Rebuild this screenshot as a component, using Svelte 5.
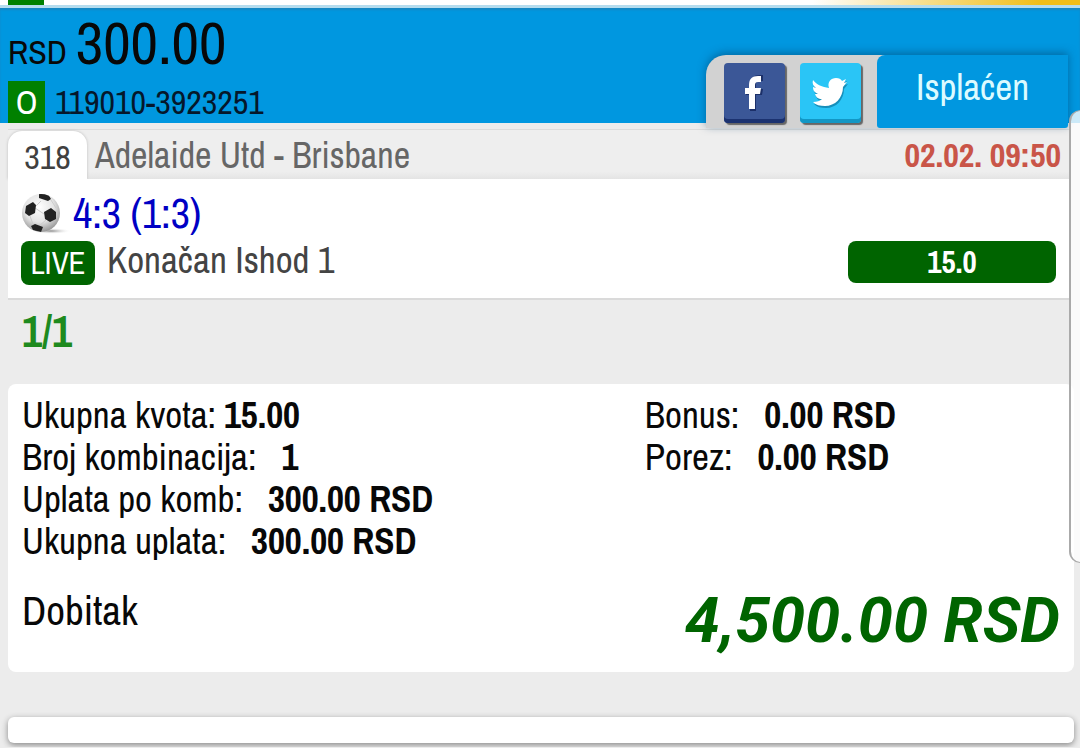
<script lang="ts">
    interface Total {
        label: string;
        value: string;
        tight?: boolean;
    }

    const ticket = {
        currency: 'RSD',
        amount: '300.00',
        mark: 'O',
        code: '119010-3923251',
        status: 'Isplaćen',
        hits: '1/1',
        payout: '4,500.00 RSD'
    };

    const match = {
        id: '318',
        teams: 'Adelaide Utd - Brisbane',
        time: '02.02. 09:50',
        score: '4:3 (1:3)',
        bet: 'Konačan Ishod 1',
        odds: '15.0'
    };

    const stakes: Total[] = [
        { label: 'Ukupna kvota:', value: '15.00', tight: true },
        { label: 'Broj kombinacija:', value: '1' },
        { label: 'Uplata po komb:', value: '300.00 RSD' },
        { label: 'Ukupna uplata:', value: '300.00 RSD' }
    ];

    const extras: Total[] = [
        { label: 'Bonus:', value: '0.00 RSD' },
        { label: 'Porez:', value: '0.00 RSD' }
    ];
</script>

<div class="page">
    <div class="previous">
        <span class="previous-mark"></span>
        <span class="previous-status"></span>
    </div>

    <header class="ticket-header">
        <div class="ticket-info">
            <div class="amount">
                <span class="currency">{ticket.currency}</span>
                <span class="value">{ticket.amount}</span>
            </div>
            <div class="code">
                <span class="mark">{ticket.mark}</span>
                <span>{ticket.code}</span>
            </div>
        </div>
        <div class="tabs">
            <div class="share">
                <button class="facebook" aria-label="Facebook">
                    <svg viewBox="0 0 60 56">
                        <path class="shade" d="M26 46V30h-4v-6h4v-4c0-7 4-10 10-10h3v6h-3c-3 0-4 1-4 4v4h7l-1 6h-6v16z" />
                        <path d="M25 44V29h-4v-6h4v-3c0-6 3-9 9-9h3v6h-3c-2 0-3 1-3 3v3h6l-1 6h-5v15z" />
                    </svg>
                </button>
                <button class="twitter" aria-label="Twitter">
                    <svg viewBox="0 0 60 56">
                        <path class="shade" transform="translate(1 1)" d="M13 16c4 5 9 7 16 8-2-6 2-10 7-10 3 0 5 1 6 3l4-2-2 4 3-1-4 5c0 11-8 19-18 19-5 0-9-1-12-4 4 0 7-1 9-3-4 0-6-2-7-5h3c-4-2-5-4-5-7l3 1c-3-2-4-5-3-8z" />
                        <path transform="translate(0 -1)" d="M13 16c4 5 9 7 16 8-2-6 2-10 7-10 3 0 5 1 6 3l4-2-2 4 3-1-4 5c0 11-8 19-18 19-5 0-9-1-12-4 4 0 7-1 9-3-4 0-6-2-7-5h3c-4-2-5-4-5-7l3 1c-3-2-4-5-3-8z" />
                    </svg>
                </button>
            </div>
            <div class="status">{ticket.status}</div>
        </div>
    </header>

    <main>
        <section class="match">
            <div class="match-head">
                <span class="match-id">{match.id}</span>
                <span class="teams">{match.teams}</span>
                <time>{match.time}</time>
            </div>
            <div class="match-body">
                <div class="score">
                    <svg class="ball" viewBox="0 0 50 42" aria-hidden="true">
                        <defs>
                            <radialGradient id="ball-skin" cx="0.45" cy="0.35" r="0.65">
                                <stop offset="0" stop-color="#fff" />
                                <stop offset="0.6" stop-color="#e4e4e4" />
                                <stop offset="1" stop-color="#999" />
                            </radialGradient>
                            <radialGradient id="ball-shadow">
                                <stop offset="0" stop-color="#888" />
                                <stop offset="1" stop-color="#fff" stop-opacity="0" />
                            </radialGradient>
                            <clipPath id="ball-edge"><circle cx="20" cy="21" r="19" /></clipPath>
                        </defs>
                        <ellipse cx="30" cy="39" rx="20" ry="3" fill="url(#ball-shadow)" />
                        <circle cx="20" cy="21" r="19" fill="url(#ball-skin)" />
                        <g clip-path="url(#ball-edge)">
                            <path class="seam" d="M14 16l9 6M20 9l-6 6M30 8l5 8M9 24l4 11M25 28l-7 6" />
                            <path class="patch" d="M18 1l9 1 3 5-3 2-9-3zM5 14l7-4 3 3-1 8-6 3-4-3zM23 20l7-4 5 4v7l-6 3-5-3zM10 34l4-2 8 3-2 5-8-2z" />
                        </g>
                    </svg>
                    <span>{match.score}</span>
                </div>
                <div class="bet">
                    <span class="live">LIVE</span>
                    <span class="bet-name">{match.bet}</span>
                    <strong class="odds">{match.odds}</strong>
                </div>
            </div>
        </section>

        <div class="hits">{ticket.hits}</div>

        <section class="summary">
            <div class="totals">
                {#each [stakes, extras] as column}
                    <div class="column">
                        {#each column as total}
                            <div class="total" class:tight={total.tight}>
                                <span>{total.label}</span>
                                <strong>{total.value}</strong>
                            </div>
                        {/each}
                    </div>
                {/each}
            </div>
            <div class="payout">
                <span>Dobitak</span>
                <strong>{ticket.payout}</strong>
            </div>
        </section>

        <div class="next"></div>
    </main>

    <div class="scroll-handle"></div>
</div>

<style>
    :global(body) {
        margin: 0;
        background: #ececec;
    }

    .page {
        position: relative;
        overflow: hidden;
        padding-bottom: 4px;
        font-family: 'Archivo Narrow', 'Liberation Sans Narrow', 'Arial Narrow', 'Liberation Sans', sans-serif;
        color: #080808;
    }

    .previous {
        display: flex;
        justify-content: space-between;
        height: 5px;
        padding-left: 8px;
        background: #fff;
        border-bottom: 3px solid #b5dcee;
    }

    .previous-mark {
        width: 36px;
        background: #008000;
    }

    .previous-status {
        width: 25%;
        background: linear-gradient(to right, #fff, #f0bd18 85%);
    }

    .ticket-header {
        display: flex;
        justify-content: space-between;
        align-items: flex-end;
        height: 115px;
        padding: 0 12px 0 8px;
        background: #0097e0;
        box-shadow: inset 0 2px 2px #1787c2;
    }

    .amount {
        display: flex;
        align-items: baseline;
        gap: 9px;
        line-height: 58px;
    }

    .currency {
        font-size: 34px;
    }

    .value {
        font-size: 60px;
    }

    .code {
        display: flex;
        align-items: center;
        gap: 10px;
        font-size: 34px;
        line-height: 42px;
        color: #05172b;
    }

    .mark {
        width: 37px;
        text-align: center;
        color: #fff;
        background: #008000;
    }

    .tabs {
        display: flex;
        height: 73px;
        margin-bottom: -5px;
        background: #d2d2d2;
        border-radius: 20px 0 0 0;
        box-shadow: 0 -2px 8px rgba(0, 60, 100, 0.5);
        z-index: 1;
    }

    .share {
        display: flex;
        gap: 15px;
        padding: 8px 16px 0 18px;
    }

    .share button {
        width: 61px;
        height: 60px;
        padding: 0;
        border: 0;
        border-radius: 4px;
    }

    .share svg {
        display: block;
        width: 60px;
        height: 56px;
        fill: #fff;
    }

    .facebook {
        background: #3b5797;
        box-shadow: inset 0 -4px #1b3270, 2px 2px 1px #666;
    }

    .twitter {
        background: #2ac5f6;
        box-shadow: inset 0 -4px #1297c5, 2px 2px 1px #666;
    }

    .facebook .shade {
        fill: #1c3069;
    }

    .twitter .shade {
        fill: #168fbb;
    }

    .status {
        width: 191px;
        color: #dcfbff;
        font-size: 37px;
        line-height: 64px;
        text-align: center;
        background: #0097e0;
        border-radius: 8px 0 3px 3px;
    }

    main {
        padding: 6px 6px 0 8px;
    }

    .match {
        margin-right: 5px;
    }

    .match-head {
        display: flex;
        align-items: center;
        height: 49px;
        font-size: 36px;
        color: #666;
        background: linear-gradient(#eee 85%, #e4e4e4);
        border-top: 1px solid #dcdcdc;
    }

    .match-id {
        align-self: flex-end;
        width: 79px;
        margin-right: 8px;
        padding-top: 4px;
        font-size: 34px;
        line-height: 44px;
        text-align: center;
        color: #404040;
        background: #fff;
        border-radius: 14px 14px 0 0;
        box-shadow: 0 0 3px #bbb;
    }

    time {
        margin-left: auto;
        padding-right: 8px;
        font-size: 34px;
        font-weight: bold;
        color: #c95548;
    }

    .match-body {
        position: relative;
        padding: 12px 13px 13px;
        background: #fff;
        border-bottom: 2px solid #dadada;
    }

    .score {
        display: flex;
        align-items: center;
        gap: 2px;
        height: 43px;
        font-size: 42px;
        color: #0000c4;
    }

    .ball {
        width: 50px;
        height: 42px;
    }

    .seam {
        fill: none;
        stroke: #ccc;
    }

    .patch {
        fill: #222;
    }

    .bet {
        display: flex;
        align-items: flex-start;
        padding-top: 7px;
        line-height: 44px;
    }

    .live {
        width: 74px;
        font-size: 31px;
        text-align: center;
        color: #fff;
        background: #006400;
        border-radius: 8px;
    }

    .bet-name {
        padding-left: 12px;
        font-size: 37px;
        line-height: 38px;
        color: #444;
    }

    .odds {
        width: 208px;
        margin-left: auto;
        font-size: 31px;
        line-height: 42px;
        text-align: center;
        color: #fff;
        background: #006400;
        border-radius: 8px;
    }

    .hits {
        padding: 8px 14px 30px;
        font-size: 44px;
        font-weight: bold;
        line-height: 46px;
        color: #1e8a1e;
    }

    .summary {
        padding: 10px 14px 12px;
        background: #fff;
        border-radius: 8px;
    }

    .totals {
        display: grid;
        grid-template-columns: 3fr 2fr;
    }

    .total {
        display: flex;
        gap: 25px;
        font-size: 37px;
        line-height: 42px;
    }

    .tight {
        gap: 8px;
    }

    .payout {
        display: flex;
        justify-content: space-between;
        padding-top: 20px;
        font-size: 41px;
        line-height: 58px;
    }

    .payout strong {
        font-family: Roboto, sans-serif;
        font-size: 63px;
        font-style: italic;
        line-height: 78px;
        color: #006400;
    }

    .next {
        height: 26px;
        margin-top: 45px;
        background: #fff;
        border-radius: 6px;
        box-shadow: 0 2px 6px #888;
    }

    .scroll-handle {
        position: absolute;
        top: 110px;
        right: -12px;
        width: 20px;
        height: 451px;
        background: rgba(255, 255, 255, 0.8);
        border: 1px solid #aaa;
        border-left-width: 2px;
        border-radius: 14px;
        z-index: 2;
    }
</style>
